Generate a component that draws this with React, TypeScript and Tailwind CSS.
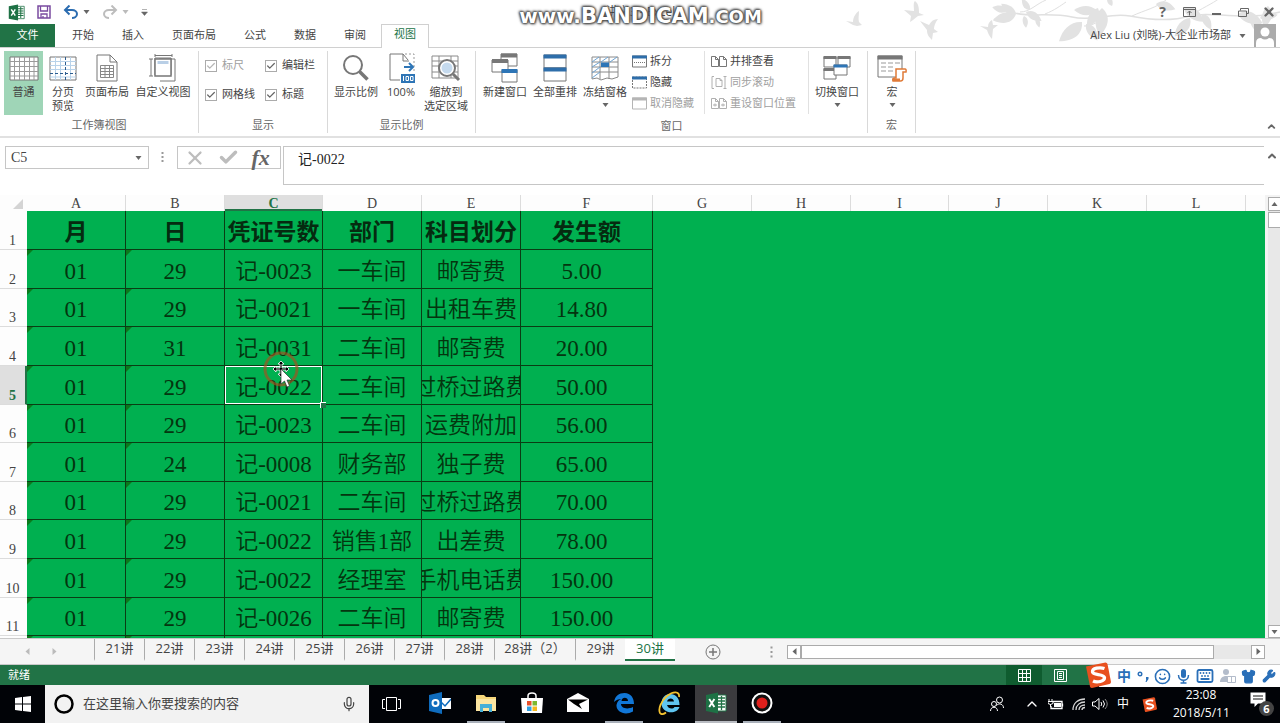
import React from 'react';
import { Mic, Shirt, Smile, Wrench, X, Check, ChevronUp, Keyboard } from 'lucide-react';

interface Column {
  name: string;
  width: string;
}

const COLUMNS: Column[] = [
  { name: 'A', width: 'w-[99px]' },
  { name: 'B', width: 'w-[99px]' },
  { name: 'C', width: 'w-[98px]' },
  { name: 'D', width: 'w-[99px]' },
  { name: 'E', width: 'w-[99px]' },
  { name: 'F', width: 'w-[132px]' },
  { name: 'G', width: 'w-[99px]' },
  { name: 'H', width: 'w-[99px]' },
  { name: 'I', width: 'w-[98px]' },
  { name: 'J', width: 'w-[99px]' },
  { name: 'K', width: 'w-[99px]' },
  { name: 'L', width: 'w-[99px]' },
];

// the zoomed sheet rounds its rows to 38 or 39 pixels
const ROWS: { height: string; cells: string[] }[] = [
  { height: 'h-[39px]', cells: ['月', '日', '凭证号数', '部门', '科目划分', '发生额'] },
  { height: 'h-[39px]', cells: ['01', '29', '记-0023', '一车间', '邮寄费', '5.00'] },
  { height: 'h-[38px]', cells: ['01', '29', '记-0021', '一车间', '出租车费', '14.80'] },
  { height: 'h-[39px]', cells: ['01', '31', '记-0031', '二车间', '邮寄费', '20.00'] },
  { height: 'h-[39px]', cells: ['01', '29', '记-0022', '二车间', '过桥过路费', '50.00'] },
  { height: 'h-[38px]', cells: ['01', '29', '记-0023', '二车间', '运费附加', '56.00'] },
  { height: 'h-[39px]', cells: ['01', '24', '记-0008', '财务部', '独子费', '65.00'] },
  { height: 'h-[38px]', cells: ['01', '29', '记-0021', '二车间', '过桥过路费', '70.00'] },
  { height: 'h-[39px]', cells: ['01', '29', '记-0022', '销售1部', '出差费', '78.00'] },
  { height: 'h-[39px]', cells: ['01', '29', '记-0022', '经理室', '手机电话费', '150.00'] },
  { height: 'h-[38px]', cells: ['01', '29', '记-0026', '二车间', '邮寄费', '150.00'] },
];

const SHEETS = ['21讲', '22讲', '23讲', '24讲', '25讲', '26讲', '27讲', '28讲', '28讲（2）', '29讲', '30讲'];

const SERIF = "font-['Liberation_Serif','Noto_Sans_CJK_SC',serif]";

/* ---------- small shared drawings ---------- */

const Icon: React.FC<{ w: number; h: number; className?: string; children: React.ReactNode }> = ({ w, h, className = '', children }) => (
  <svg width={w} height={h} viewBox={`0 0 ${w} ${h}`} fill="none" className={`shrink-0 ${className}`} aria-hidden="true">
    {children}
  </svg>
);

const Caret: React.FC<{ className?: string }> = ({ className = 'text-[#666]' }) => (
  <Icon w={7} h={4} className={className}>
    <path d="M0.500 0h6L3.500 4z" fill="currentColor" />
  </Icon>
);

const ExcelLogo: React.FC<{ size: number }> = ({ size }) => (
  <svg width={size} height={size} viewBox="0 0 22 22" className="shrink-0" aria-hidden="true">
    <path d="M12 3h9v16h-9z" fill="#fff" stroke="#217346" />
    <path d="M13 6h7M13 9h7M13 12h7M13 15h7M16.500 4v14" stroke="#217346" strokeWidth="1.300" />
    <path d="M1 3l12-2.500v21L1 19z" fill="#1e7145" />
    <path d="M4.200 7l5.200 8M9.400 7l-5.200 8" stroke="#fff" strokeWidth="1.900" />
  </svg>
);

const SogouLogo: React.FC<{ size: number }> = ({ size }) => (
  <svg width={size} height={size} viewBox="0 0 26 26" className="shrink-0" aria-hidden="true">
    <path d="M1 4.500L20.500 0.500q1.500 0 2 1.500L26 20q0 1.500-1.500 2L7 26q-1.500 0-2-1.500z" fill="#e8501f" />
    <path d="M19.500 6.500C15 5 7 6 7.500 10c.5 3.500 11.500 1.500 12 5.500.4 4-7.500 5.500-11.500 3.500" stroke="#fff" strokeWidth="3.300" fill="none" />
  </svg>
);

/* ---------- title bar and tabs ---------- */

// x, y, turn and length of every leaf on the branch
const LEAVES: [number, number, number, number][] = [
  [168, 10, 190, 16], [176, 14, 165, 24], [176, 14, 215, 18], [184, 16, 80, 12], [190, 10, 235, 14], [186, 12, 30, 18],
  [196, 18, 70, 10], [242, 22, 140, 30], [246, 24, 55, 20], [256, 10, 180, 22], [262, 8, 95, 28], [258, 8, 120, 22],
  [272, 6, 250, 12], [316, 4, 15, 20], [350, 18, 130, 24], [344, 8, 35, 24], [362, 14, 60, 18],
  [398, 14, 20, 26], [410, 18, 50, 22], [428, 6, 100, 22], [420, 18, 350, 18],
];

const Backdrop: React.FC = () => (
  <svg width="440" height="47" viewBox="0 0 440 47" fill="#e2e2e2" className="pointer-events-none absolute right-0 top-0" aria-hidden="true">
    <path d="M170 12C190 18 210 12 232 17S270 12 290 16 330 22 350 16 400 22 440 12" stroke="#e0e0e0" strokeWidth="1.500" fill="none" />
    <path d="M180 12C190 12 196 4 206 0M205 14C215 10 220 6 226 2M292 16C305 10 316 8 326 0M350 16C362 8 372 4 380 -2M262 18C256 24 250 26 244 26" stroke="#e0e0e0" fill="none" />
    {LEAVES.map(([x, y, turn, length], i) => (
      <path key={i} transform={`translate(${x} ${y}) rotate(${turn}) scale(${length / 20})`} d="M0 0C5-7 13-6 20 0 13 5 5 5 0 0z" />
    ))}
    <path d="M6 21l7 1c0-5 3-9 6-11 0 4-1 8 0 11l3 3-5 1-4-1z" />
    <path d="M64 10l10 1c0-5-1-8 1-10 4 3 4 8 4 12l5 2-6 1c-3 2-6 5-8 6l1-6z" />
    <path d="M80 21l9 4c2-4 5-6 9-6-3 4-4 7-4 10l4 3-5 1-1 7c-4-4-5-6-5-10z" />
    <path d="M140 26l8 1c0-4 2-6 4-7l1 5 5 0-5 4-1 10c-3-3-4-6-5-9z" />
  </svg>
);

const TitleBar: React.FC = () => (
  <div className="flex h-6 shrink-0 items-center justify-between pl-2">
    <div className="flex w-[140px] items-center">
      <ExcelLogo size={17} />
      <button aria-label="保存" className="ml-3">
        <Icon w={14} h={14}>
          <path d="M1 1h12v12H1z" stroke="#7a4ba0" strokeWidth="1.500" />
          <path d="M3.500 1v5h7V1M4 13V9h6v4M6 11v2" stroke="#7a4ba0" strokeWidth="1.300" />
        </Icon>
      </button>
      <button aria-label="撤消" className="ml-3 flex items-center gap-1">
        <Icon w={16} h={14}>
          <path d="M2 5h7c3 0 5 2 5 4 0 3-3 4-5 4" stroke="#2b6cb0" strokeWidth="2" />
          <path d="M6.500 0.500L2 5l4.500 4.500" stroke="#2b6cb0" strokeWidth="2" />
        </Icon>
        <Caret />
      </button>
      <button aria-label="恢复" className="ml-3 flex items-center gap-1">
        <Icon w={16} h={14}>
          <path d="M14 5H7C4 5 2 7 2 9c0 3 3 4 5 4" stroke="#bdbdbd" strokeWidth="2" />
          <path d="M9.500 0.500L14 5 9.500 9.500" stroke="#bdbdbd" strokeWidth="2" />
        </Icon>
        <Caret className="text-[#bbb]" />
      </button>
      <button aria-label="自定义快速访问工具栏" className="ml-3">
        <Icon w={7} h={7}>
          <path d="M1 0.500h5M0.500 3h6L3.500 6.500z" fill="#666" stroke="#666" strokeWidth="0.500" />
        </Icon>
      </button>
    </div>
    <div className="relative mr-4 text-[12px] text-[#444]">
      讲义3 - Excel
      <div className="absolute left-1/2 top-1/2 flex -translate-x-1/2 -translate-y-1/2 items-baseline whitespace-nowrap pt-2 font-['DejaVu_Sans',sans-serif] font-bold leading-6 text-white [text-shadow:0_0_2px_#444,0_0_2px_#444,0_0_3px_#555,1px_1px_3px_#666,-1px_-1px_3px_#666]">
        <span className="text-[20px]">www.</span>
        <span className="text-[21px]">BANDICAM</span>
        <span className="text-[18px]">.COM</span>
      </div>
    </div>
    <div className="z-10 flex items-center text-[#666]">
      <button aria-label="帮助" className="w-[27px] text-[14px] font-bold leading-5">?</button>
      <button aria-label="功能区显示选项" className="flex w-[27px] justify-center">
        <Icon w={13} h={10}>
          <path d="M0.500 0.500h12v9H0.500zM0.500 2.500h12M6.500 8.500V4M4.500 6l2-2 2 2" stroke="#666" />
        </Icon>
      </button>
      <button aria-label="最小化" className="flex w-[27px] justify-center">
        <Icon w={9} h={8}><path d="M0 6h9" stroke="#666" strokeWidth="2" /></Icon>
      </button>
      <button aria-label="还原" className="flex w-[27px] justify-center">
        <Icon w={11} h={9}>
          <path d="M2.500 2.500v-2h8v5h-2M0.500 3h8v5.500h-8z" stroke="#666" />
        </Icon>
      </button>
      <button aria-label="关闭" className="flex w-[23px] justify-center">
        <X size={14} strokeWidth={4} />
      </button>
    </div>
  </div>
);

const TABS: [string, string][] = [
  ['开始', 'w-[50px]'],
  ['插入', 'w-[50px]'],
  ['页面布局', 'w-[72px]'],
  ['公式', 'w-[50px]'],
  ['数据', 'w-[50px]'],
  ['审阅', 'w-[50px]'],
];

const TabRow: React.FC = () => (
  <div className="flex h-6 shrink-0 border-b border-[#d0d0d0] text-[11px] text-[#444]">
    <button className="mr-[3px] h-[23px] w-[55px] bg-[#217346] text-white">文件</button>
    {TABS.map(([name, width]) => (
      <button key={name} className={width}>{name}</button>
    ))}
    <button className="ml-px h-6 w-[48px] border border-b-0 border-[#d0d0d0] bg-white pb-1 text-[#217346]">视图</button>
    <div className="z-10 ml-auto flex items-center gap-2 pr-1">
      <button className="flex items-center gap-2">
        Alex Liu (刘晓)-大企业市场部
        <Caret />
      </button>
      <Icon w={22} h={23} className="bg-[#ababab]">
        <circle cx="11" cy="8" r="4.500" fill="#fff" />
        <path d="M2 23v-4q0-5 5-5 4 3 8 0 5 0 5 5v4z" fill="#fff" />
      </Icon>
    </div>
  </div>
);

/* ---------- ribbon icons ---------- */

const NormalIcon = () => (
  <Icon w={30} h={26}>
    <path d="M1 2h28v23H1z" fill="#fff" stroke="#777" />
    <path d="M5.500 2v23M10.500 2v23M15.500 2v23M20.500 2v23M25 2v23M1 6.500h28M1 11.500h28M1 16.500h28M1 21h28" stroke="#9a9a9a" />
  </Icon>
);

const PageBreakIcon = () => (
  <Icon w={28} h={26}>
    <path d="M1 2h26v23H1z" fill="#fff" stroke="#777" />
    <path d="M6.500 2v23M11.500 2v23M21.500 2v23M1 6.500h26M1 10.500h26M1 14.500h26M1 22h26" stroke="#b9d3ea" />
    <path d="M16.500 2v23M1 18.500h26" stroke="#2b5c8f" strokeDasharray="3 2" />
  </Icon>
);

const PageLayoutIcon = () => (
  <Icon w={22} h={28}>
    <path d="M1 1h13l7 7v19H1z" fill="#fff" stroke="#777" />
    <path d="M14 1v7h7" stroke="#777" />
    <path d="M4.500 11.500h13v12h-13zM9 11.500v12M13.500 11.500v12M4.500 14.500h13M4.500 17.500h13M4.500 20.500h13" stroke="#888" />
  </Icon>
);

const CustomViewIcon = () => (
  <Icon w={28} h={28}>
    <path d="M10 5h16v22H11M6 4h16v17H6z" fill="#fff" stroke="#777" />
    <path d="M6 5h16v17H6z" fill="#fff" stroke="#777" strokeWidth="1.500" />
    <path d="M8.500 7h11v3h-11z" fill="#b9cfe6" />
    <path d="M6 1.500h17M6 0v3M23 0v3M2 5v17M0 5h4M0 22h4" stroke="#777" />
  </Icon>
);

const ZoomIcon = () => (
  <Icon w={30} h={28}>
    <circle cx="12" cy="11" r="9" stroke="#777" strokeWidth="2" />
    <path d="M18.500 17.500l8 8" stroke="#777" strokeWidth="3.500" />
  </Icon>
);

const HundredIcon = () => (
  <Icon w={27} h={30}>
    <path d="M12 27H2V1h13l5 6" fill="#fff" stroke="#777" />
    <path d="M15 1v7h6" stroke="#777" />
    <path d="M17 1h9v19" stroke="#999" strokeDasharray="2 2" />
    <path d="M16 14h9M21 10l4 4-4 4" stroke="#2e75b6" strokeWidth="2" />
    <path d="M13 21h14v9H13z" fill="#2e75b6" />
    <path d="M15.500 23v5M18 23.500h2.500v4H18zM22.500 23.500H25v4h-2.500z" stroke="#fff" />
  </Icon>
);

const ZoomSelectionIcon = () => (
  <Icon w={30} h={28}>
    <path d="M1 2h26v22H1zM1 7h26M1 12h26M1 18h26M8 2v22M20 2v22" stroke="#8a8a8a" />
    <circle cx="16" cy="14" r="8" fill="#fff" stroke="#777" strokeWidth="2" />
    <circle cx="16" cy="14" r="5.500" fill="#c5daee" />
    <path d="M22 20l6 6" stroke="#777" strokeWidth="3" />
  </Icon>
);

const NewWindowIcon = () => (
  <Icon w={28} h={30}>
    <path d="M10 1h16v12H10z" fill="#fff" stroke="#777" /><path d="M10 0.500h16v4H10z" fill="#777" />
    <path d="M1 7h16v12H1z" fill="#fff" stroke="#777" /><path d="M1 6h16v4H1z" fill="#777" />
    <path d="M11 17h15v12H11z" fill="#fff" stroke="#777" /><path d="M10.500 16h16v4h-16z" fill="#2e75b6" />
  </Icon>
);

const ArrangeIcon = () => (
  <Icon w={26} h={28}>
    <path d="M2 1h22v13H2zM2 14h22v13H2z" fill="#fff" stroke="#777" />
    <path d="M1.500 0.500h23v4h-23zM1.500 13.500h23v4h-23z" fill="#2e6eaa" />
  </Icon>
);

const FreezeIcon = () => (
  <Icon w={28} h={26}>
    <path d="M1 24V2h26v20M1 7h26M1 12h26M1 17h26M9 2v22M18 2v22M1 24l5-1 4 2 6-2 5 1 6-2" stroke="#8a8a8a" />
    <path d="M1 7l7-5M1 12l8-5M1 18l8-6M10 7l7-5M19 7l7-5M1 23l8-6" stroke="#6ea3d2" />
    <path d="M10 7.500h8v4.500h-8z" fill="#2e75b6" />
  </Icon>
);

const SwitchIcon = () => (
  <Icon w={28} h={26}>
    <path d="M1 2h12v10H1zM15 2h12v10H15zM1 14h12v10H1z" fill="#fff" stroke="#777" />
    <path d="M0.500 1h13v3h-13zM14.500 1h13v3h-13zM0.500 13h13v3h-13z" fill="#777" />
    <path d="M11 10h13v10H11z" fill="#fff" stroke="#777" /><path d="M10.500 9.500h14v3h-14z" fill="#2e75b6" />
  </Icon>
);

const MacroIcon = () => (
  <Icon w={30} h={27}>
    <path d="M1 1h24v21H1z" fill="#fff" stroke="#777" /><path d="M0.500 0.500h25v4h-25z" fill="#777" />
    <path d="M4 8h5M11 8h5M18 8h5M4 12h5M11 12h5M4 16h5M11 16h5" stroke="#999" />
    <path d="M19 14h9q1.500 0 1 3h-3v6q0 3-2.500 3H16q-1-3 2-3h1z" fill="#fff" stroke="#e07b39" strokeWidth="1.500" />
    <path d="M16 23.500h7v2.500h-7z" fill="#e07b39" />
  </Icon>
);

/* ---------- ribbon ---------- */

const BigButton: React.FC<{ icon: React.ReactNode; lines: string[]; width: string; active?: boolean; menu?: boolean }> = ({ icon, lines, width, active, menu }) => (
  <button className={`flex h-[64px] flex-col items-center ${width} ${active ? 'bg-[#9fd5b7]' : ''}`}>
    <span className="flex h-[34px] items-center justify-center">{icon}</span>
    {lines.map(line => (
      <span key={line} className="whitespace-nowrap leading-[14px]">{line}</span>
    ))}
    {menu && <span className="flex h-3 items-center"><Caret /></span>}
  </button>
);

const SmallButton: React.FC<{ icon: React.ReactNode; label: string; disabled?: boolean }> = ({ icon, label, disabled }) => (
  <button disabled={disabled} className={`flex h-[21px] items-center gap-[3px] whitespace-nowrap ${disabled ? 'text-[#a0a0a0]' : ''}`}>
    {icon}
    {label}
  </button>
);

const Group: React.FC<{ label: string; width: string; children: React.ReactNode }> = ({ label, width, children }) => (
  <section className={`my-[3px] flex shrink-0 flex-col border-r border-[#d9d9d9] ${width}`}>
    <div className="flex h-[67px] pl-1">{children}</div>
    <h2 className="text-center leading-4 text-[#666]">{label}</h2>
  </section>
);

const Tick: React.FC<{ label: string; disabled?: boolean }> = ({ label, disabled }) => (
  <label className={`flex items-center gap-[5px] whitespace-nowrap ${disabled ? 'text-[#a0a0a0]' : ''}`}>
    <span className="grid size-3 place-items-center">
      <input type="checkbox" defaultChecked disabled={disabled} className="size-3 appearance-none border border-[#ababab] bg-white [grid-area:1/1]" />
      <Check size={10} strokeWidth={3} className={`pointer-events-none [grid-area:1/1] ${disabled ? 'text-[#b5b5b5]' : 'text-[#666]'}`} />
    </span>
    {label}
  </label>
);

const MiniWindow: React.FC<{ kind: 'split' | 'hide' | 'show' }> = ({ kind }) => (
  <Icon w={15} h={13}>
    <path d="M0.500 1h14v11h-14z" stroke={kind === 'show' ? '#b5b5b5' : '#777'} strokeDasharray={kind === 'hide' ? '2 1' : undefined} />
    <path d="M0 0.500h15v3H0z" fill={kind === 'show' ? '#b5b5b5' : '#2e6eaa'} />
    {kind === 'split' && <path d="M2 7.500h11" stroke="#777" strokeDasharray="1 1" />}
  </Icon>
);

const MiniPages: React.FC<{ kind: 'side' | 'sync' | 'reset' }> = ({ kind }) => (
  <Icon w={16} h={13}>
    {kind === 'sync' ? (
      <path d="M3 0.500H1v12h2M5 2.500h4l2 2v6H5zM9 2.500v2h2M14 1v11M12.500 0.500h3M12.500 12.500h3" stroke="#b0b0b0" />
    ) : (
      <path d="M0.500 1.500h4l3 3v7h-7zM4.500 1.500v3h3M8.500 1.500h4l3 3v7h-7zM12.500 1.500v3h3" stroke={kind === 'side' ? '#777' : '#b0b0b0'} />
    )}
    {kind === 'reset' && <path d="M2 8h4M10 8h4M4 6.500v3M12 6.500v3" stroke="#b0b0b0" />}
  </Icon>
);

const Ribbon: React.FC = () => (
  <div className="flex h-[90px] shrink-0 border-b-2 border-[#e1e1e1] bg-white text-[11px] text-[#444]">
    <Group label="工作簿视图" width="w-[199px]">
      <BigButton active icon={<NormalIcon />} lines={['普通']} width="w-[39px]" />
      <BigButton icon={<PageBreakIcon />} lines={['分页', '预览']} width="w-10" />
      <BigButton icon={<PageLayoutIcon />} lines={['页面布局']} width="w-12" />
      <BigButton icon={<CustomViewIcon />} lines={['自定义视图']} width="w-16" />
    </Group>
    <Group label="显示" width="w-[129px]">
      <div className="grid grid-cols-[60px_auto] grid-rows-2 pb-2 pl-[2px]">
        <Tick label="标尺" disabled />
        <Tick label="编辑栏" />
        <Tick label="网格线" />
        <Tick label="标题" />
      </div>
    </Group>
    <Group label="显示比例" width="w-[148px]">
      <BigButton icon={<ZoomIcon />} lines={['显示比例']} width="w-12" />
      <BigButton icon={<HundredIcon />} lines={['100%']} width="w-[42px]" />
      <BigButton icon={<ZoomSelectionIcon />} lines={['缩放到', '选定区域']} width="w-12" />
    </Group>
    <Group label="窗口" width="w-[392px]">
      <BigButton icon={<NewWindowIcon />} lines={['新建窗口']} width="w-[50px]" />
      <BigButton icon={<ArrangeIcon />} lines={['全部重排']} width="w-[50px]" />
      <BigButton icon={<FreezeIcon />} lines={['冻结窗格']} width="w-[50px]" menu />
      <div className="mb-1 flex w-[75px] flex-col border-r border-[#e1e1e1] pl-[2px]">
        <SmallButton icon={<MiniWindow kind="split" />} label="拆分" />
        <SmallButton icon={<MiniWindow kind="hide" />} label="隐藏" />
        <SmallButton icon={<MiniWindow kind="show" />} label="取消隐藏" disabled />
      </div>
      <div className="mb-1 mr-[3px] flex w-[104px] flex-col border-r border-[#e1e1e1] pl-[6px]">
        <SmallButton icon={<MiniPages kind="side" />} label="并排查看" />
        <SmallButton icon={<MiniPages kind="sync" />} label="同步滚动" disabled />
        <SmallButton icon={<MiniPages kind="reset" />} label="重设窗口位置" disabled />
      </div>
      <BigButton icon={<SwitchIcon />} lines={['切换窗口']} width="w-[50px]" menu />
    </Group>
    <Group label="宏" width="w-12">
      <BigButton icon={<MacroIcon />} lines={['宏']} width="w-10" menu />
    </Group>
    <button aria-label="折叠功能区" className="ml-auto mr-[3px] self-end pb-1 text-[#666]">
      <ChevronUp size={11} strokeWidth={4} />
    </button>
  </div>
);

/* ---------- formula bar ---------- */

const FormulaBar: React.FC = () => (
  <div className="flex h-[57px] shrink-0 items-start bg-white pl-[5px] pt-2">
    <div className="flex h-[23px] w-36 items-center border border-[#c6c6c6] pr-[6px]">
      <input aria-label="名称框" defaultValue="C5" className={`w-full min-w-0 pl-[5px] text-[14px] text-[#444] outline-none ${SERIF}`} />
      <Caret />
    </div>
    <Icon w={28} h={22}>
      <path d="M13.500 6v2M13.500 10v2M13.500 14v2" stroke="#999" strokeWidth="2" />
    </Icon>
    <div className="flex h-[23px] w-[104px] items-center justify-around border border-[#c6c6c6] pr-1">
      <button aria-label="取消" className="text-[#bdbdbd]"><X size={22} strokeWidth={2.500} /></button>
      <button aria-label="输入" className="text-[#bdbdbd]"><Check size={21} strokeWidth={4} /></button>
      <button aria-label="插入函数" className="font-['Liberation_Serif',serif] text-[22px] font-bold italic leading-5 text-[#666]">fx</button>
    </div>
    <input
      aria-label="编辑栏"
      defaultValue="记-0022"
      className={`ml-[2px] h-[39px] min-w-0 flex-1 border border-r-0 border-[#c6c6c6] pb-4 pl-[14px] text-[14px] text-[#222] outline-none ${SERIF}`}
    />
    <button aria-label="折叠编辑栏" className="px-[2px] pt-1 text-[#666]"><ChevronUp size={12} strokeWidth={4} /></button>
  </div>
);

/* ---------- worksheet ---------- */

const Selection: React.FC = () => (
  <>
    <div className="pointer-events-none absolute inset-0 border border-white" />
    <div className="absolute -bottom-1 -right-1 z-10 size-[6px] border-l border-t border-white bg-[#217346]" />
    <svg width="40" height="40" viewBox="0 0 40 40" className="absolute -top-4 left-9 z-20" aria-hidden="true">
      <circle cx="20" cy="19" r="16" stroke="#a8501e" strokeOpacity="0.650" strokeWidth="3" fill="none" />
      <path d="M20 11l3 3h-2v4h4v-2l3 3-3 3v-2h-4v4h2l-3 3-3-3h2v-4h-4v2l-3-3 3-3v2h4v-4h-2z" fill="#000" stroke="#fff" strokeWidth="0.800" />
      <path d="M20 19v15l3.500-3 2.500 6 2.500-1-2.500-6h5z" fill="#fff" stroke="#333" strokeWidth="0.700" />
    </svg>
  </>
);

const ErrorMark = () => (
  <svg width="6" height="6" className="absolute left-0 top-0" aria-hidden="true"><path d="M0 0h6L0 6z" fill="#0b7a1c" /></svg>
);

const Worksheet: React.FC = () => (
  <main className="flex min-h-0 flex-1">
    <div className="min-w-0 flex-1 overflow-hidden bg-[#00b050]">
      <table className={`w-full table-fixed border-separate border-spacing-0 ${SERIF}`}>
        <thead className="bg-[#fdfdfd] text-[14px] leading-[15px] text-[#444]">
          <tr className="h-4">
            <th aria-label="全选" className="w-[27px] p-0">
              <Icon w={24} h={14}><path d="M23 3v10H13z" fill="#d4d4d4" /></Icon>
            </th>
            {COLUMNS.map(({ name, width }) => (
              <th
                key={name}
                className={`${width} border-r border-[#dcdcdc] p-0 ${name === 'C' ? 'bg-[#dfdfdf] font-bold text-[#217346] shadow-[inset_0_-2px_0_#217346]' : 'font-normal'}`}
              >
                {name}
              </th>
            ))}
            <th aria-label="M" className="p-0" />
          </tr>
        </thead>
        <tbody>
          {ROWS.map(({ height, cells }, row) => (
            <tr key={row} className={height}>
              <th
                className={`border-b border-[#dcdcdc] p-0 align-bottom text-[14px] leading-4 ${row === 4 ? 'border-r-2 border-r-[#217346] bg-[#dfdfdf] font-bold text-[#217346]' : 'bg-[#fdfdfd] pr-[2px] font-normal text-[#444]'}`}
              >
                {row + 1}
              </th>
              {cells.map((text, col) => (
                <td key={col} className="relative border-b border-r border-[#0a3d14] p-0">
                  <div
                    className={`flex h-[37px] items-center justify-center overflow-hidden whitespace-nowrap pt-1 text-[23px] leading-none ${row === 0 ? 'font-bold text-[#052b10]' : 'font-[350] text-[#04350f]'} ${row > 0 && col === 5 ? 'pr-[10px]' : ''}`}
                  >
                    {text}
                  </div>
                  {row > 0 && col < 2 && <ErrorMark />}
                  {row === 4 && col === 2 && <Selection />}
                </td>
              ))}
              <td colSpan={7} className="p-0" />
            </tr>
          ))}
          <tr className="h-[39px]">
            <th aria-label="12" className="bg-[#fdfdfd] p-0" />
            {COLUMNS.slice(0, 6).map(({ name }, col) => (
              <td key={name} className="relative border-r border-[#0a3d14] p-0">{col < 2 && <ErrorMark />}</td>
            ))}
            <td colSpan={7} className="p-0" />
          </tr>
        </tbody>
      </table>
    </div>
    <div className="flex w-[15px] shrink-0 flex-col bg-[#f3f3f3] pl-[3px] pt-[2px]">
      <button aria-label="向上滚动" className="flex h-[14px] items-center justify-center border border-r-0 border-[#ababab] bg-white"><Caret className="rotate-180 text-[#666]" /></button>
      <div className="flex-1 bg-[#e8e8e8] pt-px"><div className="h-4 border border-r-0 border-[#ababab] bg-white" /></div>
      <button aria-label="向下滚动" className="flex h-[13px] items-center justify-center border border-r-0 border-[#ababab] bg-white"><Caret /></button>
    </div>
  </main>
);

const SheetBar: React.FC = () => (
  <nav className="flex h-[27px] shrink-0 border-b border-t border-[#c9c9c9] bg-[#f5f5f5] text-[13px] text-[#444]">
    <div className="flex w-[94px] items-center gap-[22px] pl-[25px] text-[#bbb]">
      <button aria-label="上一个工作表"><Icon w={5} h={7}><path d="M4.500 0v7L0.500 3.500z" fill="currentColor" /></Icon></button>
      <button aria-label="下一个工作表"><Icon w={5} h={7}><path d="M0.500 0v7l4-3.500z" fill="currentColor" /></Icon></button>
    </div>
    {SHEETS.map(name => {
      const active = name === '30讲';
      return (
        <button
          key={name}
          className={`mb-[3px] whitespace-nowrap border-b-2 ${name.length > 3 ? 'w-[81px]' : 'w-[50px]'} ${active ? 'border-[#217346] bg-white text-[#217346]' : 'border-b-transparent border-l border-l-[#ababab]'}`}
        >
          {name}
        </button>
      );
    })}
    <button aria-label="新工作表" className="ml-[30px]">
      <Icon w={16} h={16}>
        <circle cx="8" cy="8" r="7" stroke="#777" />
        <path d="M8 4v8M4 8h8" stroke="#777" strokeWidth="1.500" />
      </Icon>
    </button>
    <div className="ml-auto flex w-[516px] items-center pr-[15px]">
      <Icon w={15} h={12} className="mr-2"><path d="M7.500 0.500v2M7.500 5v2M7.500 9.500v2" stroke="#999" strokeWidth="2" /></Icon>
      <button aria-label="向左滚动" className="flex size-[14px] items-center justify-center border border-[#ababab] bg-white text-[#666]"><Icon w={5} h={7}><path d="M4.500 0v7L0.500 3.500z" fill="currentColor" /></Icon></button>
      <div className="flex h-[14px] flex-1 bg-[#e8e8e8] pr-[37px]"><div className="flex-1 border border-[#ababab] bg-white" /></div>
      <button aria-label="向右滚动" className="flex size-[14px] items-center justify-center border border-[#ababab] bg-white text-[#666]"><Icon w={5} h={7}><path d="M0.500 0v7l4-3.500z" fill="currentColor" /></Icon></button>
    </div>
  </nav>
);

/* ---------- status bar, input method bar, taskbar ---------- */

const ImeBar: React.FC = () => (
  <div className="absolute right-0 top-0 z-10 flex h-[22px] w-[181px] items-center bg-white text-[#2a6fb8]">
    <div className="absolute -left-[14px] -top-[3px]"><SogouLogo size={26} /></div>
    <div className="flex flex-1 items-center justify-between pl-[18px] pr-1">
      <span className="text-[14px] font-bold leading-none">中</span>
      <Icon w={12} h={14}>
        <circle cx="3" cy="5" r="1.800" stroke="#2a6fb8" strokeWidth="1.400" />
        <path d="M9 8h2.500v2L9.500 13H8.500l0.800-2.500H9z" fill="#2a6fb8" />
      </Icon>
      <Smile size={17} strokeWidth={2.200} />
      <Icon w={13} h={16}>
        <rect x="4" y="1" width="5" height="9" rx="2.500" fill="#2a6fb8" />
        <path d="M1.500 7c0 7 10 7 10 0M6.500 12v3M3.500 15h6" stroke="#2a6fb8" strokeWidth="1.500" />
      </Icon>
      <Keyboard size={18} strokeWidth={2.400} />
      <Icon w={16} h={16}>
        <circle cx="6" cy="4" r="3" fill="#b3bccb" />
        <path d="M0 14c0-8 12-8 12 0z" fill="#b3bccb" />
        <path d="M7.500 8.500h8v6h-8z" fill="#fff" stroke="#b3bccb" /><path d="M11.500 8v6" stroke="#b3bccb" />
      </Icon>
      <Shirt size={15} fill="#2a6fb8" />
      <Wrench size={14} fill="#2a6fb8" />
    </div>
  </div>
);

const StatusBar: React.FC = () => (
  <footer className="relative flex h-5 shrink-0 items-center bg-[#217346] text-[11px] text-white">
    <span className="pl-2">就绪</span>
    <div className="ml-auto mr-[202px] flex h-full">
      <button aria-label="普通视图" className="flex w-9 items-center justify-center bg-[#0f5c2f]">
        <Icon w={13} h={13}><path d="M0.500 0.500h12v12H0.500zM4.500 0.500v12M8.500 0.500v12M0.500 4.500h12M0.500 8.500h12" stroke="#fff" /></Icon>
      </button>
      <button aria-label="页面布局视图" className="flex w-9 items-center justify-center">
        <Icon w={13} h={13}><path d="M0.500 0.500h12v12H0.500zM3.500 2.500h6v8h-6zM5 4.500h3M5 6.500h3M5 8.500h3" stroke="#fff" /></Icon>
      </button>
    </div>
    <ImeBar />
  </footer>
);

const OutlookIcon = () => (
  <Icon w={22} h={22}>
    <path d="M10 6h12v11H10z" fill="#fff" /><path d="M12 10l4 4 6-7" stroke="#0f6cbd" strokeWidth="1.500" />
    <path d="M0 3l13-3v22L0 19z" fill="#0f6cbd" /><circle cx="6.500" cy="11" r="3" stroke="#fff" strokeWidth="2" />
  </Icon>
);

const FolderIcon = () => (
  <Icon w={22} h={20}>
    <path d="M1 2h8l2 2h10v13H1z" fill="#f6d77a" /><path d="M1 6h20v12H1z" fill="#fbe6a2" />
    <path d="M5 19v-8h12v8h-3v-4H8v4z" fill="#45b0d8" />
  </Icon>
);

const StoreIcon = () => (
  <Icon w={22} h={22}>
    <path d="M7 7V4q0-3 4-3t4 3v3" stroke="#fff" strokeWidth="1.500" />
    <path d="M0 6h22l-1 15H1z" fill="#fff" />
    <path d="M6 9h4.500v4.500H6z" fill="#e8502a" /><path d="M11.500 9H16v4.500h-4.500z" fill="#7cb82f" />
    <path d="M6 14.500h4.500V19H6z" fill="#2f9fe0" /><path d="M11.500 14.500H16V19h-4.500z" fill="#f5b81e" />
  </Icon>
);

const MailIcon = () => (
  <Icon w={24} h={20}>
    <path d="M1 6l11-6 11 6v13H1z" fill="#fff" /><path d="M2 6.500h20L13 11l3 5-8-5z" fill="#000" />
  </Icon>
);

const EdgeIcon = () => (
  <Icon w={22} h={22}>
    <path d="M1 10C2 4 6 1 11.500 1 18 1 21 6 21 12H8c0 4 6 6 12 3v4.500C12 24 3 20 3.500 13 4 9.500 6 8 8.500 7 5.500 7 3 8 1 10zM8.500 9H15c0-4-6-4.500-6.500 0z" fill="#1177d7" fillRule="evenodd" />
  </Icon>
);

const IeIcon = () => (
  <Icon w={24} h={24}>
    <path d="M12 3c6 0 9.500 4 9.500 11H9c1 4 6 4.500 7.500 2h5C19 24 3.500 23 3.500 12.500 3.500 7 7 3 12 3zM9 10.500h7c-.5-4-6-4-7 0z" fill="#5fc5f1" fillRule="evenodd" />
    <path d="M21 6C22 0 15 0 9 5 3 10 0 18 2 22c1.500 2 4 1 6-.5" stroke="#f3c230" strokeWidth="1.800" />
  </Icon>
);

const RecordIcon = () => (
  <Icon w={22} h={22}>
    <circle cx="11" cy="11" r="9.500" fill="#111" stroke="#fff" strokeWidth="2" /><circle cx="11" cy="11" r="5.500" fill="#e0201c" />
  </Icon>
);

const APPS: { name: string; icon: React.ReactNode; state?: 'open' | 'active' }[] = [
  { name: 'Outlook', icon: <OutlookIcon /> },
  { name: '文件资源管理器', icon: <FolderIcon />, state: 'open' },
  { name: '应用商店', icon: <StoreIcon /> },
  { name: '邮件', icon: <MailIcon /> },
  { name: 'Edge', icon: <EdgeIcon />, state: 'open' },
  { name: 'Internet Explorer', icon: <IeIcon /> },
  { name: 'Excel', icon: <ExcelLogo size={22} />, state: 'active' },
  { name: 'Bandicam', icon: <RecordIcon />, state: 'open' },
];

const Taskbar: React.FC = () => (
  <div className="flex h-[38px] shrink-0 bg-[#010307] text-white">
    <button aria-label="开始" className="flex w-[45px] items-center justify-center">
      <Icon w={16} h={16}><path d="M0 2l7-1v6.500H0zM8 1l8-1v7.500H8zM0 8.500h7V15l-7-1zM8 8.500h8V16l-8-1z" fill="#fff" /></Icon>
    </button>
    <label className="flex w-[324px] items-center bg-[#f2f2f2] pl-[9px] pr-3 text-[#444]">
      <Icon w={20} h={20}><circle cx="10" cy="10" r="8.500" stroke="#000" strokeWidth="2.500" /></Icon>
      <input aria-label="搜索" placeholder="在这里输入你要搜索的内容" className="min-w-0 flex-1 pl-[9px] text-[13px] outline-none placeholder:text-[#444]" />
      <Mic size={16} strokeWidth={1.800} />
    </label>
    <button aria-label="任务视图" className="flex w-12 items-center justify-center pr-1">
      <Icon w={19} h={14}><path d="M4.500 0.500h10v13h-10zM3 2.500H0.500v9H3M16 2.500h2.500v9H16" stroke="#fff" /></Icon>
    </button>
    {APPS.map(({ name, icon, state }) => (
      <button key={name} aria-label={name} className="flex w-[46px] justify-center">
        <span
          className={`flex h-full items-center justify-center border-b-2 ${state === 'active' ? 'w-[42px] border-[#b9bcc2] bg-[#3b3b3e]' : state === 'open' ? 'w-[38px] border-[#a9b0ba]' : 'w-[38px] border-transparent'}`}
        >
          {icon}
        </span>
      </button>
    ))}
    <div className="ml-auto flex items-center">
      <Icon w={14} h={16} className="mr-5">
        <circle cx="9.500" cy="4" r="3" stroke="#fff" /><circle cx="4" cy="8" r="2.500" stroke="#fff" />
        <path d="M0.500 15c0-5 7-5 7 0M6.500 9.500c2.500-3 7-1.500 7 2.500" stroke="#fff" />
      </Icon>
      <ChevronUp size={16} strokeWidth={2} className="mr-2" />
      <Icon w={16} h={12} className="mr-2">
        <path d="M5 3.500h9v7H3V8M14.500 5.500v3" stroke="#fff" strokeWidth="1.300" />
        <path d="M6 5h7v4H6z" fill="#fff" /><path d="M1 1v2M4 1v2M0 3.500h5v2q-2.500 2-5 0zM2.500 6v3" stroke="#fff" />
      </Icon>
      <Icon w={14} h={13} className="mr-[6px]">
        <path d="M1 12C1 5 6 1 13 1M4 12c0-5 4-8 9-8M7 12c0-3 2.500-5 6-5M10 12c0-1.500 1-2.500 3-2.500" stroke="#d5d5d5" strokeWidth="1.300" />
      </Icon>
      <Icon w={16} h={14} className="mr-[9px]">
        <path d="M0.500 5H3l4-3.500v11L3 9H0.500z" stroke="#fff" /><path d="M9 5q1.500 2 0 4M11 3.500q3 3.500 0 7" stroke="#fff" /><path d="M13 2q4.500 5 0 10" stroke="#888" />
      </Icon>
      <span className="mr-[13px] text-[12px] leading-none">中</span>
      <SogouLogo size={15} />
      <time className="ml-4 w-14 whitespace-nowrap text-center text-[12px] leading-[18px]">23:08<br />2018/5/11</time>
      <button aria-label="通知" className="relative ml-[21px] mr-[14px] pb-2">
        <Icon w={16} h={16}><path d="M0.500 0.500h15v11H8L4.500 15v-3.500h-4z" fill="#fff" /><path d="M3 4h10M3 7h10" stroke="#111" /></Icon>
        <span className="absolute -right-2 bottom-0 size-[15px] rounded-full bg-[#444] text-center text-[11px] font-bold leading-[15px]">6</span>
      </button>
    </div>
  </div>
);

export default function App() {
  return (
    <div className="relative flex h-screen flex-col overflow-hidden bg-white font-['Open_Sans','Noto_Sans_CJK_SC',sans-serif]">
      <Backdrop />
      <TitleBar />
      <TabRow />
      <Ribbon />
      <FormulaBar />
      <Worksheet />
      <SheetBar />
      <StatusBar />
      <Taskbar />
    </div>
  );
}
